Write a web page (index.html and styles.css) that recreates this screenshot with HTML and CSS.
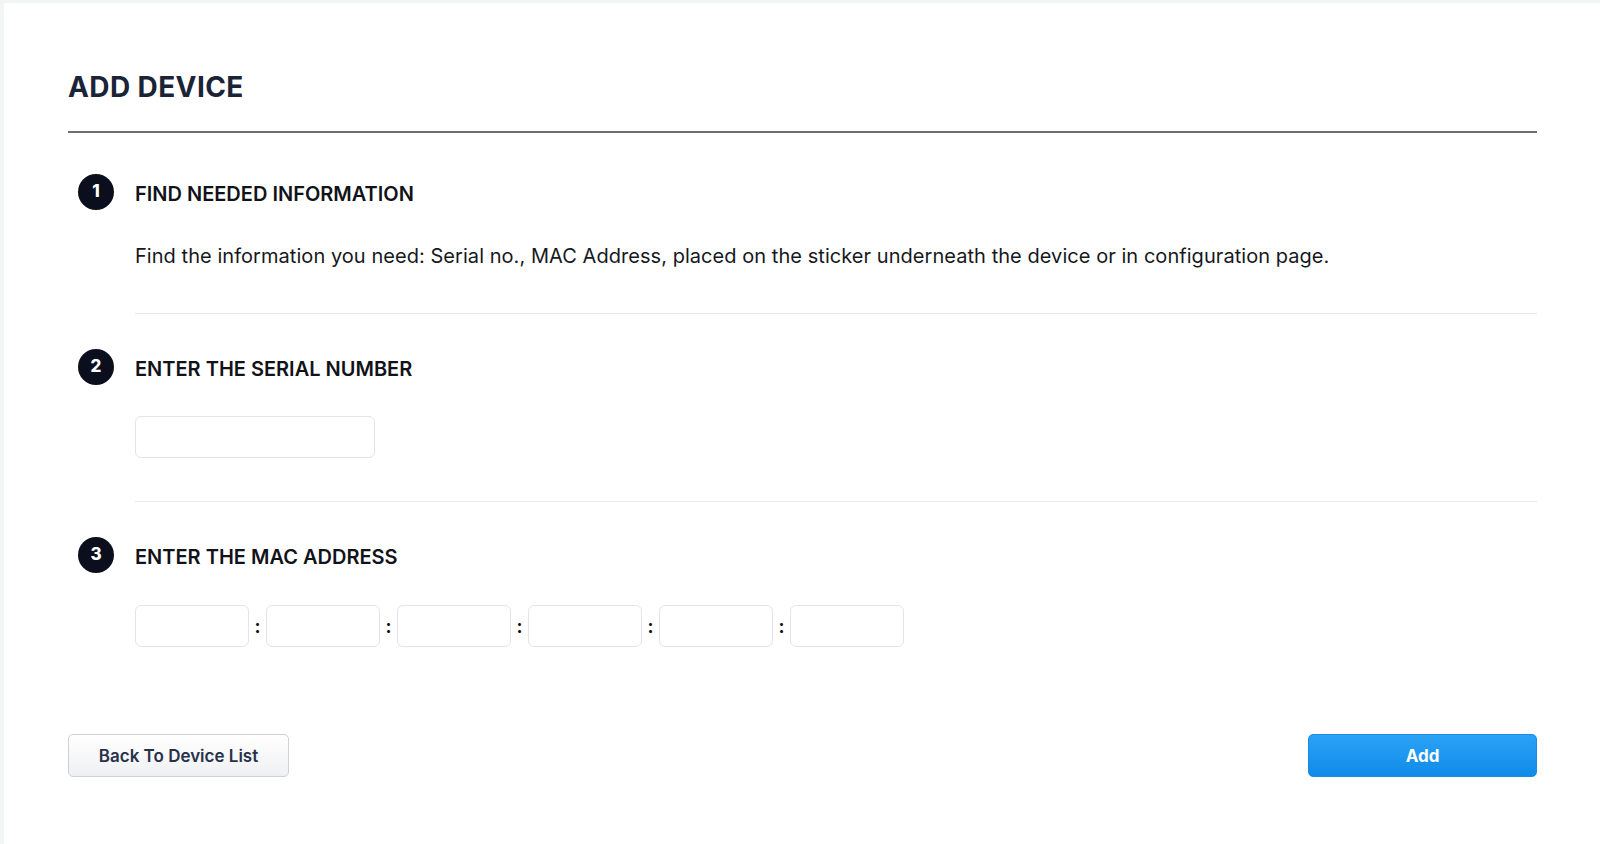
FILE: index.html
```
<!DOCTYPE html>
<html>

<head>
    <meta charset="UTF-8">
    <title>Add Device</title>
    <link rel="stylesheet" href="styles.css">
</head>

<body>
    <div class="page">
        <h1 class="title">ADD DEVICE</h1>

        <div class="step">
            <div class="step-num"><span>1</span></div>
            <div class="step-main">
                <h2 class="step-title">FIND NEEDED INFORMATION</h2>
                <p class="step-text">Find the information you need: Serial no., MAC Address, placed on the sticker underneath the device or in configuration page.</p>
            </div>
        </div>

        <div class="step">
            <div class="step-num"><span>2</span></div>
            <div class="step-main">
                <h2 class="step-title">ENTER THE SERIAL NUMBER</h2>
                <input class="field serial" type="text">
            </div>
        </div>

        <div class="step last">
            <div class="step-num"><span>3</span></div>
            <div class="step-main">
                <h2 class="step-title">ENTER THE MAC ADDRESS</h2>
                <div class="mac">
                    <input class="field mac-part" type="text" maxlength="2">
                    <span class="colon">:</span>
                    <input class="field mac-part" type="text" maxlength="2">
                    <span class="colon">:</span>
                    <input class="field mac-part" type="text" maxlength="2">
                    <span class="colon">:</span>
                    <input class="field mac-part" type="text" maxlength="2">
                    <span class="colon">:</span>
                    <input class="field mac-part" type="text" maxlength="2">
                    <span class="colon">:</span>
                    <input class="field mac-part" type="text" maxlength="2">
                </div>
            </div>
        </div>

        <div class="actions">
            <button class="btn btn-back">Back To Device List</button>
            <button class="btn btn-add">Add</button>
        </div>
    </div>
</body>

</html>
```

FILE: styles.css
```
* {
    padding: 0;
    margin: 0;
    box-sizing: border-box;
}

html,
body {
    height: 100%;
}

body {
    background: #f3f5f5;
    font-family: Inter, "Noto Sans", sans-serif;
    color: #111319;
}

.page {
    min-height: calc(100% - 3px);
    margin: 3px 0 0 4px;
    padding: 67px 63px 40px 64px;
    background: #fff;
}

.title {
    font-size: 28px;
    line-height: 34px;
    font-weight: 700;
    letter-spacing: 0.4px;
    color: #1b2437;
    padding-bottom: 27px;
    border-bottom: 2px solid #6e6e6e;
}

.step {
    display: flex;
}

.step-num {
    width: 67px;
    padding-left: 10px;
    flex-shrink: 0;
}

/* circle sits a touch higher than the heading text */
.step-num span {
    display: block;
    width: 36px;
    height: 36px;
    margin-top: -2px;
    line-height: 34px;
    border-radius: 50%;
    background: #0b0e1c;
    color: #fff;
    text-align: center;
    font-size: 17px;
    font-weight: 800;
}

.step .step-num,
.step .step-main {
    padding-top: 37px;
}

.step:first-of-type .step-num,
.step:first-of-type .step-main {
    padding-top: 43px;
}

.step-main {
    flex: 1;
    padding-bottom: 43px;
    border-bottom: 1px solid #e8e9eb;
}

.step.last .step-main {
    border-bottom: none;
    padding-bottom: 0;
}

.step-title {
    font-size: 20px;
    line-height: 36px;
    font-weight: 600;
    color: #111319;
}

.step-text {
    margin-top: 30px;
    font-size: 20px;
    line-height: 28px;
    letter-spacing: 0.05px;
    color: #16181d;
}

.field {
    display: block;
    height: 42px;
    border: 1.5px solid #e2e4ea;
    border-radius: 6px;
    background: #fff;
    outline: none;
    font-family: inherit;
    font-size: 16px;
    padding: 0 10px;
}

.serial {
    width: 240px;
    margin-top: 29px;
}

.mac {
    display: flex;
    align-items: center;
    margin-top: 30px;
}

.mac-part {
    width: 114px;
}

.colon {
    width: 17px;
    text-align: center;
    font-size: 18px;
    font-weight: 700;
    color: #111;
}

.actions {
    display: flex;
    justify-content: space-between;
    margin-top: 87px;
}

.btn {
    height: 43px;
    border-radius: 5px;
    font-family: inherit;
    font-size: 17px;
    font-weight: 600;
    cursor: pointer;
}

.btn-back {
    width: 221px;
    border: 1.5px solid #cdd0d7;
    background: linear-gradient(#ffffff, #eff0f3);
    color: #27324a;
}

.btn-add {
    width: 229px;
    border: 1px solid #1a8ce6;
    background: linear-gradient(#2aa2f6, #0f8be8);
    color: #fff;
    font-weight: 700;
}
```
